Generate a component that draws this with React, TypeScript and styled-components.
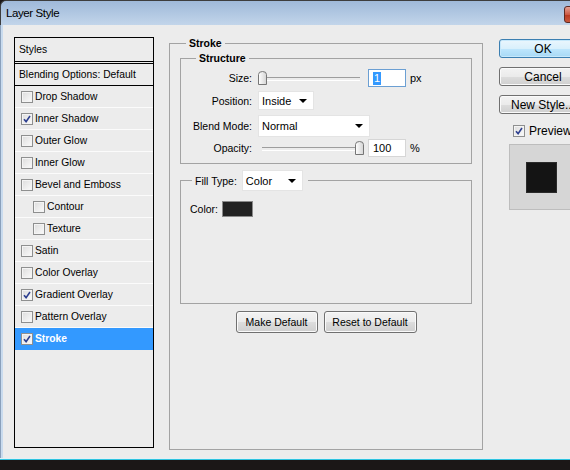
import styled, { createGlobalStyle } from "styled-components";

const GlobalStyle = createGlobalStyle`
  html, body {
    margin: 0;
    padding: 0;
  }
  body {
    width: 570px;
    height: 470px;
    overflow: hidden;
    background: #1b1717;
    font-family: "Liberation Sans", Arial, sans-serif;
    color: #000;
  }
  * {
    box-sizing: border-box;
  }
`;

const Window = styled.div`
  width: 610px;
  height: 470px;
  display: flex;
  flex-direction: column;
`;

const TitleBar = styled.div`
  height: 25px;
  flex: none;
  display: flex;
  align-items: flex-start;
  justify-content: space-between;
  padding-left: 5px;
  background: linear-gradient(#9fb9d9, #c2d5ea);
  border-top: 1px solid #3d3d3d;
  border-left: 1px solid #3d3d3d;
  border-top-left-radius: 6px;

  > span {
    font-size: 11.5px;
    letter-spacing: -0.4px;
    line-height: 25px;
  }
`;

// only the left edge of the close button shows inside the frame
const CloseBtn = styled.div`
  width: 43px;
  height: 17px;
  margin: 5px 3px 0 0;
  border: 1px solid #5e2a22;
  border-radius: 3px;
  background: linear-gradient(#e6a193, #cc5a44 50%, #b8371f 51%, #c9583c);
`;

const Body = styled.div`
  flex: 1;
  display: flex;
  align-items: flex-start;
  background: #ececec;
  border-left: 1px solid #8aa0bb;
  box-shadow: inset 2px 0 0 #c9dbee;
  padding: 12px 0 0 13px;
`;

const BottomEdge = styled.div`
  height: 2px;
  flex: none;
  background: linear-gradient(#e3f0f5 50%, #2fc3df 50%);
`;

const Taskbar = styled.div`
  height: 10px;
  flex: none;
  background: #1b1717;
`;

/* ---------- left list ---------- */

const StylesPanel = styled.div`
  width: 140px;
  height: 411px;
  flex: none;
  border: 1px solid #000;
  display: flex;
  flex-direction: column;
  font-size: 10.3px;
`;

const PanelHeader = styled.div`
  height: 26px;
  flex: none;
  padding-left: 4px;
  border-bottom: 3px double #000;
  display: flex;
  align-items: center;
`;

const BlendRow = styled.div`
  height: 22px;
  flex: none;
  padding-left: 4px;
  border-bottom: 1px solid #000;
  display: flex;
  align-items: center;
`;

const StyleRow = styled.div<{ $indent?: boolean; $active?: boolean }>`
  height: 22px;
  flex: none;
  display: flex;
  align-items: center;
  gap: 2px;
  padding-left: ${(p) => (p.$indent ? "18px" : "6px")};
  border-bottom: 1px solid ${(p) => (p.$active ? "#3399ff" : "#fbfbfb")};
  background: ${(p) => (p.$active ? "#3399ff" : "transparent")};
  color: ${(p) => (p.$active ? "#fff" : "#000")};
  font-weight: ${(p) => (p.$active ? 700 : 400)};
`;

const Box = styled.span`
  width: 12px;
  height: 12px;
  flex: none;
  border: 1px solid #8e8f8f;
  background: linear-gradient(135deg, #dcdcdc, #fbfbfb);
  box-shadow: inset 0 0 0 1px #f4f4f4;
  display: flex;
  align-items: center;
  justify-content: center;
`;

function CheckBox({ checked }: { checked?: boolean }) {
  return (
    <Box>
      {checked ? (
        <svg width="8" height="8" viewBox="0 0 8 8">
          <path
            d="M1 4.2 L3.1 6.6 L7 1"
            fill="none"
            stroke="#2d3f8f"
            strokeWidth="1.6"
          />
        </svg>
      ) : null}
    </Box>
  );
}

/* ---------- middle groups ---------- */

const Group = styled.fieldset<{ $h?: number; $top?: number }>`
  margin: ${(p) => p.$top ?? 0}px 0 0 0;
  padding: 0;
  min-width: 0;
  height: ${(p) => (p.$h ? `${p.$h}px` : "auto")};
  border: 1px solid #a3a3a3;
`;

const StrokeGroup = styled(Group)`
  width: 314px;
  flex: none;
  margin-left: 15px;
  padding: 0 10px;
`;

const Legend = styled.legend<{ $left: number }>`
  margin-left: ${(p) => p.$left}px;
  padding: 0 3px;
  font-size: 10.5px;
  font-weight: 700;
  line-height: 12px;
`;

const FillLegend = styled.legend`
  margin-left: 11px;
  padding: 0 5px 0 3px;
  display: flex;
  align-items: center;
  gap: 5px;
  font-size: 10.5px;
`;

const Rows = styled.div`
  display: flex;
  flex-direction: column;
  padding: 5px 0 7px;
`;

const Row = styled.div<{ $h: number; $gap?: number }>`
  height: ${(p) => p.$h}px;
  margin-top: ${(p) => p.$gap ?? 0}px;
  display: grid;
  grid-template-columns: 71px auto;
  column-gap: 6px;
  align-items: center;
  font-size: 10.5px;

  > label {
    text-align: right;
  }
`;

const Controls = styled.div`
  display: flex;
  align-items: center;
  font-size: 11px;
`;

const Slider = styled.div`
  position: relative;
  width: 106px;
  height: 14px;

  &::before {
    content: "";
    position: absolute;
    left: 4px;
    right: 4px;
    top: 6px;
    height: 2px;
    border-top: 1px solid #9d9d9d;
    border-bottom: 1px solid #fff;
  }

  > svg {
    position: absolute;
    top: 0;
  }
`;

function RangeSlider({ value }: { value: number }) {
  return (
    <Slider>
      <svg width="9" height="14" viewBox="0 0 9 14" style={{ left: `${(value / 100) * 97}px` }}>
        <defs>
          <linearGradient id="thumb" x1="0" x2="1">
            <stop offset="0" stopColor="#ffffff" />
            <stop offset="1" stopColor="#d4d4d4" />
          </linearGradient>
        </defs>
        <path
          d="M0.5 3.5 Q0.5 0.5 4.5 0.5 Q8.5 0.5 8.5 3.5 V13.5 H0.5 Z"
          fill="url(#thumb)"
          stroke="#767676"
        />
      </svg>
    </Slider>
  );
}

const NumInput = styled.div<{ $focus?: boolean }>`
  width: 38px;
  height: 18px;
  margin-left: 4px;
  padding-left: 4px;
  display: flex;
  align-items: center;
  background: #fff;
  border: 1px solid ${(p) => (p.$focus ? "#6b9fd3" : "#d6d6d6")};
  font-size: 11px;

  > mark {
    background: #3399ff;
    color: #fff;
    padding: 0 1px;
    line-height: 13px;
  }
`;

const Unit = styled.span`
  margin-left: 4px;
  font-size: 11px;
`;

const Select = styled.div<{ $w: number; $h: number }>`
  width: ${(p) => p.$w}px;
  height: ${(p) => p.$h}px;
  padding: 0 6px 0 3px;
  display: flex;
  align-items: center;
  justify-content: space-between;
  background: #fff;
  border: 1px solid #e4e4e4;
  font-size: 11px;
  font-weight: 400;

  &::after {
    content: "";
    border-left: 4px solid transparent;
    border-right: 4px solid transparent;
    border-top: 4px solid #000;
  }
`;

const ColorRow = styled.div`
  display: flex;
  align-items: center;
  gap: 4px;
  padding: 10px 0 0 9px;
  font-size: 10.5px;
`;

const Swatch = styled.span`
  width: 31px;
  height: 16px;
  background: #222;
  border: 1px solid #8a8a8a;
`;

const ButtonRow = styled.div`
  display: flex;
  justify-content: center;
  gap: 6px;
  margin-top: 7px;
`;

const SmallButton = styled.button<{ $w: number }>`
  width: ${(p) => p.$w}px;
  height: 22px;
  padding: 0;
  border: 1px solid #707070;
  border-radius: 3px;
  background: linear-gradient(#f3f3f3, #ebebeb 50%, #dddddd 51%, #cfcfcf);
  box-shadow: inset 0 0 0 1px #fafafa;
  font-family: inherit;
  font-size: 10.5px;
  color: #000;
`;

/* ---------- right column ---------- */

const SideColumn = styled.div`
  display: flex;
  flex-direction: column;
  margin-left: 16px;
  padding-top: 2px;
`;

const DialogButton = styled.button<{ $primary?: boolean }>`
  width: 88px;
  height: 19px;
  padding: 0;
  margin-bottom: 9px;
  border: 1px solid ${(p) => (p.$primary ? "#3c7fb1" : "#707070")};
  border-radius: 3px;
  background: ${(p) =>
    p.$primary
      ? "linear-gradient(#eaf6fd, #d9f0fc 50%, #bee6fd 51%, #a7d9f5)"
      : "linear-gradient(#f3f3f3, #ebebeb 50%, #dddddd 51%, #cfcfcf)"};
  box-shadow: inset 0 0 0 1px ${(p) => (p.$primary ? "#c6e8fb" : "#fafafa")};
  font-family: inherit;
  font-size: 12px;
  color: #000;
  line-height: 16px;
`;

const PreviewRow = styled.div`
  display: flex;
  align-items: center;
  gap: 4px;
  height: 14px;
  margin-top: 1px;
  padding-left: 14px;
  font-size: 12px;
`;

const PreviewBox = styled.div`
  width: 64px;
  height: 66px;
  margin: 6px 0 0 10px;
  display: flex;
  align-items: center;
  justify-content: center;
  background: #d6d6d6;
  border: 1px solid #bdbdbd;

  > span {
    width: 31px;
    height: 31px;
    background: #141414;
    border: 1px solid #2a2a2a;
  }
`;

const styleItems = [
  { name: "Drop Shadow" },
  { name: "Inner Shadow", checked: true },
  { name: "Outer Glow" },
  { name: "Inner Glow" },
  { name: "Bevel and Emboss" },
  { name: "Contour", indent: true },
  { name: "Texture", indent: true },
  { name: "Satin" },
  { name: "Color Overlay" },
  { name: "Gradient Overlay", checked: true },
  { name: "Pattern Overlay" },
  { name: "Stroke", checked: true, active: true },
];

export default function App() {
  return (
    <>
      <GlobalStyle />
      <Window>
        <TitleBar>
          <span>Layer Style</span>
          <CloseBtn />
        </TitleBar>
        <Body>
          <StylesPanel>
            <PanelHeader>Styles</PanelHeader>
            <BlendRow>Blending Options: Default</BlendRow>
            {styleItems.map((item) => (
              <StyleRow key={item.name} $indent={item.indent} $active={item.active}>
                <CheckBox checked={item.checked} />
                <span>{item.name}</span>
              </StyleRow>
            ))}
          </StylesPanel>

          <StrokeGroup $h={413}>
            <Legend $left={6}>Stroke</Legend>
            <Group $top={3}>
              <Legend $left={15}>Structure</Legend>
              <Rows>
                <Row $h={18}>
                  <label>Size:</label>
                  <Controls>
                    <RangeSlider value={0} />
                    <NumInput $focus>
                      <mark>1</mark>
                    </NumInput>
                    <Unit>px</Unit>
                  </Controls>
                </Row>
                <Row $h={19} $gap={4}>
                  <label>Position:</label>
                  <Controls>
                    <Select $w={56} $h={19}>Inside</Select>
                  </Controls>
                </Row>
                <Row $h={22} $gap={5}>
                  <label>Blend Mode:</label>
                  <Controls>
                    <Select $w={112} $h={22}>Normal</Select>
                  </Controls>
                </Row>
                <Row $h={17} $gap={2}>
                  <label>Opacity:</label>
                  <Controls>
                    <RangeSlider value={100} />
                    <NumInput>100</NumInput>
                    <Unit>%</Unit>
                  </Controls>
                </Row>
              </Rows>
            </Group>
            <Group $top={6} $h={134}>
              <FillLegend>
                <span>Fill Type:</span>
                <Select $w={61} $h={21}>Color</Select>
              </FillLegend>
              <ColorRow>
                <span>Color:</span>
                <Swatch />
              </ColorRow>
            </Group>
            <ButtonRow>
              <SmallButton $w={82}>Make Default</SmallButton>
              <SmallButton $w={93}>Reset to Default</SmallButton>
            </ButtonRow>
          </StrokeGroup>

          <SideColumn>
            <DialogButton $primary>OK</DialogButton>
            <DialogButton>Cancel</DialogButton>
            <DialogButton>New Style...</DialogButton>
            <PreviewRow>
              <CheckBox checked />
              <span>Preview</span>
            </PreviewRow>
            <PreviewBox>
              <span />
            </PreviewBox>
          </SideColumn>
        </Body>
        <BottomEdge />
        <Taskbar />
      </Window>
    </>
  );
}
